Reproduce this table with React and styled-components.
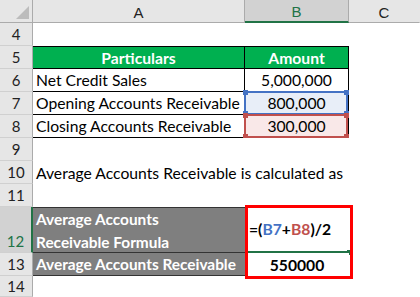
import React from "react";
import styled, { createGlobalStyle } from "styled-components";

const Global = createGlobalStyle`
  html, body { margin: 0; padding: 0; background: #fff; }
  body { font-family: Lato, "Liberation Sans", sans-serif; }
`;

const Sheet = styled.div`
  display: grid;
  grid-template-columns: 33px 212px 104px 71px;
  grid-template-rows: 23px repeat(8, 23px) 46px 23px 21px;
  width: 420px;
  height: 297px;
  overflow: hidden;
  background: #fff;
  font-size: 15.7px;
  color: #000;
`;

const Corner = styled.div`
  background: #e6e6e6;
  border-right: 1px solid #ababab;
  border-bottom: 1px solid #ababab;
  box-sizing: border-box;
  position: relative;
  &::after {
    content: "";
    position: absolute;
    right: 3px;
    bottom: 3px;
    width: 0;
    height: 0;
    border-left: 13px solid transparent;
    border-bottom: 13px solid #bcbcbc;
  }
`;

const ColHead = styled.div`
  box-sizing: border-box;
  background: ${(p) => (p.$active ? "#d2d2d2" : "#e6e6e6")};
  border-right: 1px solid ${(p) => (p.$last ? "#e6e6e6" : "#ababab")};
  border-bottom: ${(p) => (p.$active ? "2px solid #217346" : "1px solid #ababab")};
  display: flex;
  align-items: center;
  justify-content: center;
  color: ${(p) => (p.$active ? "#217346" : "#222")};
  font-family: "Liberation Sans", sans-serif;
  font-size: 15px;
  padding-top: 2px;
`;

const RowHead = styled.div`
  box-sizing: border-box;
  background: ${(p) => (p.$active ? "#d2d2d2" : "#e6e6e6")};
  border-right: ${(p) => (p.$active ? "2px solid #217346" : "1px solid #ababab")};
  border-bottom: 1px solid #d0d0d0;
  display: flex;
  align-items: ${(p) => (p.$active ? "flex-end" : "center")};
  justify-content: center;
  color: ${(p) => (p.$active ? "#217346" : "#222")};
  font-size: 15px;
  padding-bottom: ${(p) => (p.$active ? "2px" : "0")};
`;

const Cell = styled.div`
  box-sizing: border-box;
  position: relative;
  display: flex;
  align-items: center;
  justify-content: ${(p) => p.$align || "flex-start"};
  padding: 0 3px;
  white-space: nowrap;
  overflow: ${(p) => (p.$clip ? "hidden" : "visible")};
  background: ${(p) => p.$bg || "#fff"};
  color: ${(p) => p.$color || "#000"};
  font-weight: ${(p) => (p.$bold ? 700 : 400)};
  font-size: ${(p) => p.$size || "inherit"};
  border-top: ${(p) => (p.$top ? `1px solid ${p.$line || "#000"}` : "none")};
  border-bottom: ${(p) => (p.$bottom ? `1px solid ${p.$line || "#000"}` : "none")};
  border-right: ${(p) => (p.$right ? "1px solid #000" : "none")};
  grid-column: ${(p) => p.$span || "auto"};
`;

const WrapCell = styled(Cell)`
  display: block;
  white-space: normal;
  line-height: 23px;
  padding-top: 0;
`;

const RefBox = styled.div`
  position: absolute;
  inset: -1px 0 -1px -1px;
  border: 2px solid ${(p) => p.$c};
  pointer-events: none;
`;

const Handle = styled.span`
  position: absolute;
  width: 5px;
  height: 5px;
  background: ${(p) => p.$c};
  ${(p) => (p.$v === "t" ? "top: -3px;" : "bottom: -3px;")}
  ${(p) => (p.$h === "l" ? "left: -3px;" : "right: -3px;")}
`;

const ResultBlock = styled.div`
  grid-row: span 2;
  display: grid;
  grid-template-rows: 46px 23px;
  position: relative;
  z-index: 2;
`;

const FormulaCell = styled(Cell)`
  border-bottom: 2px solid #217346;
  border-left: 1px solid #217346;
  font-weight: 700;
`;

const RedFrame = styled.div`
  position: absolute;
  left: 0;
  top: -2px;
  right: -4px;
  bottom: -3px;
  border: 3px solid #ff0000;
  pointer-events: none;
`;

const FillHandle = styled.span`
  position: absolute;
  right: -3px;
  bottom: -4px;
  width: 5px;
  height: 5px;
  background: #217346;
`;

const Ref = styled.span`
  color: ${(p) => p.$c};
`;

function Ranged({ c, children }) {
  return (
    <>
      {children}
      <RefBox $c={c}>
        <Handle $c={c} $v="t" $h="l" />
        <Handle $c={c} $v="t" $h="r" />
        <Handle $c={c} $v="b" $h="l" />
        <Handle $c={c} $v="b" $h="r" />
      </RefBox>
    </>
  );
}

const GREEN = "#00b050";
const GRAY = "#7f7f7f";

export default function App() {
  return (
    <>
      <Global />
      <Sheet>
        <Corner />
        <ColHead>A</ColHead>
        <ColHead $active>B</ColHead>
        <ColHead $last>C</ColHead>

        <RowHead>4</RowHead>
        <Cell />
        <Cell />
        <Cell />

        <RowHead>5</RowHead>
        <Cell $bg={GREEN} $color="#fff" $bold $align="center" $top $bottom $right>
          Particulars
        </Cell>
        <Cell $bg={GREEN} $color="#fff" $bold $align="center" $top $bottom $right>
          Amount
        </Cell>
        <Cell />

        <RowHead>6</RowHead>
        <Cell $bottom $right>Net Credit Sales</Cell>
        <Cell $align="center" $bottom $right>5,000,000</Cell>
        <Cell />

        <RowHead>7</RowHead>
        <Cell $bottom $right>Opening Accounts Receivable</Cell>
        <Cell $align="center" $bg="#e8eef8" $bottom $right>
          <Ranged c="#4472c4">800,000</Ranged>
        </Cell>
        <Cell />

        <RowHead>8</RowHead>
        <Cell $bottom $right>Closing Accounts Receivable</Cell>
        <Cell $align="center" $bg="#f9e8e8" $bottom $right>
          <Ranged c="#c0504d">300,000</Ranged>
        </Cell>
        <Cell />

        <RowHead>9</RowHead>
        <Cell />
        <Cell />
        <Cell />

        <RowHead>10</RowHead>
        <Cell $span="span 3">Average Accounts Receivable is calculated as</Cell>

        <RowHead>11</RowHead>
        <Cell />
        <Cell />
        <Cell />

        <RowHead $active>12</RowHead>
        <WrapCell $bg={GRAY} $color="#fff" $bold $size="15.4px" $top $bottom $line="#333">
          Average Accounts<br />Receivable Formula
        </WrapCell>
        <ResultBlock>
          <FormulaCell>
            =(<Ref $c="#4472c4">B7</Ref>+<Ref $c="#c0504d">B8</Ref>)/2
            <FillHandle />
          </FormulaCell>
          <Cell $bold $align="center">550000</Cell>
          <RedFrame />
        </ResultBlock>
        <Cell />

        <RowHead>13</RowHead>
        <Cell $bg={GRAY} $color="#fff" $bold $size="15.4px" $bottom $line="#333" $clip>
          Average Accounts Receivable
        </Cell>
        <Cell />

        <RowHead>14</RowHead>
        <Cell />
        <Cell />
        <Cell />
      </Sheet>
    </>
  );
}
